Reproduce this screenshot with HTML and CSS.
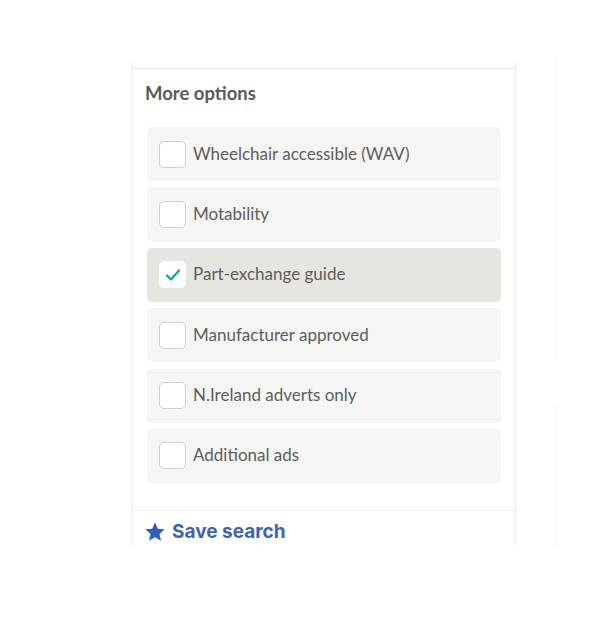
FILE: index.html
```html
<!DOCTYPE html>
<html lang="en">
<head>
    <meta charset="UTF-8">
    <meta name="viewport" content="width=device-width, initial-scale=1.0">
    <title>More options</title>
    <link rel="stylesheet" href="styles.css">
</head>
<body>
    <div class="page">
        <div class="panel">
            <div class="options">
                <h3 class="options-title">More options</h3>
                <ul class="option-list">
                    <li class="option"><span class="box"></span>Wheelchair accessible (WAV)</li>
                    <li class="option"><span class="box"></span>Motability</li>
                    <li class="option checked">
                        <span class="box">
                            <svg width="18" height="18" viewBox="0 0 18 18"><path d="M3 9.5l4 4 8-9" fill="none" stroke="#1a9e96" stroke-width="2.2" stroke-linecap="round" stroke-linejoin="round"/></svg>
                        </span>Part-exchange guide</li>
                    <li class="option"><span class="box"></span>Manufacturer approved</li>
                    <li class="option"><span class="box"></span>N.Ireland adverts only</li>
                    <li class="option"><span class="box"></span>Additional ads</li>
                </ul>
            </div>
            <a class="save" href="#">
                <svg width="22" height="22" viewBox="0 0 24 24"><path d="M12 1.5l3.1 6.9 7.4.7-5.6 5 1.7 7.5L12 17.8l-6.6 3.8 1.7-7.5-5.6-5 7.4-.7z" fill="#2f5fbd"/></svg>
                Save search
            </a>
        </div>
        <div class="rail">
            <div class="rail-top"></div>
            <div class="rail-bottom"></div>
        </div>
    </div>
</body>
</html>
```

FILE: styles.css
```css
body { margin: 0; background: #fff; font-family: Lato, "Open Sans", sans-serif; }
.page { display: flex; padding: 62px 0 0 132px; }
.panel {
    width: 382px;
    height: 485px;
    border-left: 1px solid #efefef;
    border-right: 1px solid #ececec;
    display: flex;
    flex-direction: column;
}
.options {
    margin-top: 6px;
    border-top: 1px solid #ececec;
    border-bottom: 1px solid #ececec;
    padding: 0 14px 0 14px;
    height: 441px;
}
.options-title {
    margin: 13px 0 0 -2px;
    font-size: 18.5px;
    font-weight: 700;
    color: #5a5a5a;
    line-height: 22px;
}
.option-list {
    list-style: none;
    margin: 23px 0 0 0;
    padding: 0;
    display: flex;
    flex-direction: column;
    gap: 6.2px;
}
.option {
    height: 54.2px;
    box-sizing: border-box;
    background: #f5f5f3;
    border-radius: 5px;
    display: flex;
    align-items: center;
    padding: 0 0 2px 12px;
    font-size: 17px;
    color: #5d5d5d;
}
.option.checked { background: #e6e6e1; }
.box {
    width: 25px;
    height: 25px;
    border: 1.5px solid #cfcfcf;
    border-radius: 5px;
    background: #fff;
    margin: 2px 7px 0 0;
    display: flex;
    align-items: center;
    justify-content: center;
}
.option.checked .box { border-color: #fff; }
.save {
    display: flex;
    align-items: center;
    gap: 6px;
    padding: 9px 0 0 11px;
    font-family: Inter, sans-serif;
    font-size: 19px;
    font-weight: 700;
    color: #3d63b4;
    text-decoration: none;
}
.rail {
    margin-left: 40px;
    display: flex;
    flex-direction: column;
    justify-content: space-between;
    height: 485px;
}
.rail-top { height: 298px; border-left: 1px solid #f6f6f6; }
.rail-bottom { height: 144px; border-left: 1px solid #f6f6f6; }
```
